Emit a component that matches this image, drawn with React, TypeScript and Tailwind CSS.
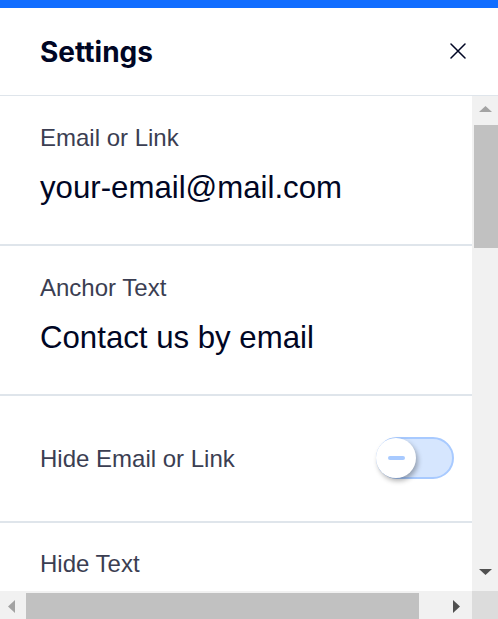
import React from "react";

const Arrow = ({ dir, color }: { dir: "up" | "down" | "left" | "right"; color: string }) => {
  if (dir === "up" || dir === "down") {
    const pts = dir === "up" ? "0,6 6.5,0 13,6" : "0,0 6.5,6 13,0";
    return (
      <svg width="13" height="6" viewBox="0 0 13 6">
        <polygon points={pts} fill={color} />
      </svg>
    );
  }
  const pts = dir === "left" ? "7,0 0,6.5 7,13" : "0,0 7,6.5 0,13";
  return (
    <svg width="7" height="13" viewBox="0 0 7 13">
      <polygon points={pts} fill={color} />
    </svg>
  );
};

const Field = ({ label, value }: { label: string; value: string }) => (
  <div className="h-[150px] shrink-0 border-b-2 border-[#dfe5eb] pl-[40px] pt-[28px]">
    <div className="text-[24px] leading-[28px] text-[#3b3e52]">{label}</div>
    <div className="mt-[18px] text-[31.2px] leading-[36px] text-[#000624] whitespace-nowrap">{value}</div>
  </div>
);

export default function App() {
  return (
    <div
      className="w-[498px] h-[619px] flex flex-col bg-white overflow-hidden"
      style={{ fontFamily: '"Liberation Sans", Arial, sans-serif' }}
    >
      <div className="h-[8px] shrink-0 bg-[#116dff]" />
      <div className="h-[88px] shrink-0 flex items-center justify-between pl-[40px] pr-[32px] border-b border-[#dfe5eb]">
        <div
          className="text-[28px] font-bold text-[#000624] leading-none"
          style={{ fontFamily: 'Inter, "Noto Sans", sans-serif' }}
        >
          Settings
        </div>
        <svg width="16" height="16" viewBox="0 0 16 16" className="mt-[-1px]">
          <path d="M1 1 L15 15 M15 1 L1 15" stroke="#000624" strokeWidth="1.5" strokeLinecap="round" />
        </svg>
      </div>
      <div className="flex flex-1 min-h-0">
        <div className="w-[472px] flex flex-col overflow-hidden">
          <Field label="Email or Link" value="your-email@mail.com" />
          <Field label="Anchor Text" value="Contact us by email" />
          <div className="h-[127px] shrink-0 border-b-2 border-[#dfe5eb] pl-[40px] pr-[18px] flex items-center justify-between">
            <div className="text-[24px] leading-[28px] text-[#3b3e52]">Hide Email or Link</div>
            <div className="relative w-[78px] h-[42px] rounded-full bg-[#d6e6fe] border-2 border-[#a8caff] mt-[-2px]">
              <div className="absolute left-[-2px] top-[-1px] w-[40px] h-[40px] rounded-full bg-white shadow-[2px_3px_5px_rgba(0,0,0,0.3)] flex items-center justify-center">
                <div className="w-[17px] h-[4px] rounded-full bg-[#a8caff]" />
              </div>
            </div>
          </div>
          <div className="shrink-0 pl-[40px] pt-[27px]">
            <div className="text-[24px] leading-[28px] text-[#3b3e52]">Hide Text</div>
          </div>
        </div>
        <div className="w-[26px] bg-[#f1f1f1] flex flex-col">
          <div className="h-[29px] shrink-0 flex items-center justify-center pl-[1px] pb-[4px]">
            <Arrow dir="up" color="#a3a3a3" />
          </div>
          <div className="h-[123px] shrink-0 ml-[2px] bg-[#c1c1c1]" />
          <div className="flex-1" />
          <div className="h-[29px] shrink-0 flex items-center justify-center pl-[1px] pb-[10px]">
            <Arrow dir="down" color="#505050" />
          </div>
        </div>
      </div>
      <div className="h-[28px] shrink-0 flex">
        <div className="w-[472px] bg-[#f1f1f1] flex">
          <div className="w-[26px] shrink-0 flex items-center justify-center pr-[4px] pt-[2px]">
            <Arrow dir="left" color="#a3a3a3" />
          </div>
          <div className="w-[393px] shrink-0 mt-[2px] bg-[#c1c1c1]" />
          <div className="flex-1 flex items-center justify-end pr-[12px] pt-[2px]">
            <Arrow dir="right" color="#505050" />
          </div>
        </div>
        <div className="w-[26px] bg-[#dcdcdc]" />
      </div>
    </div>
  );
}
